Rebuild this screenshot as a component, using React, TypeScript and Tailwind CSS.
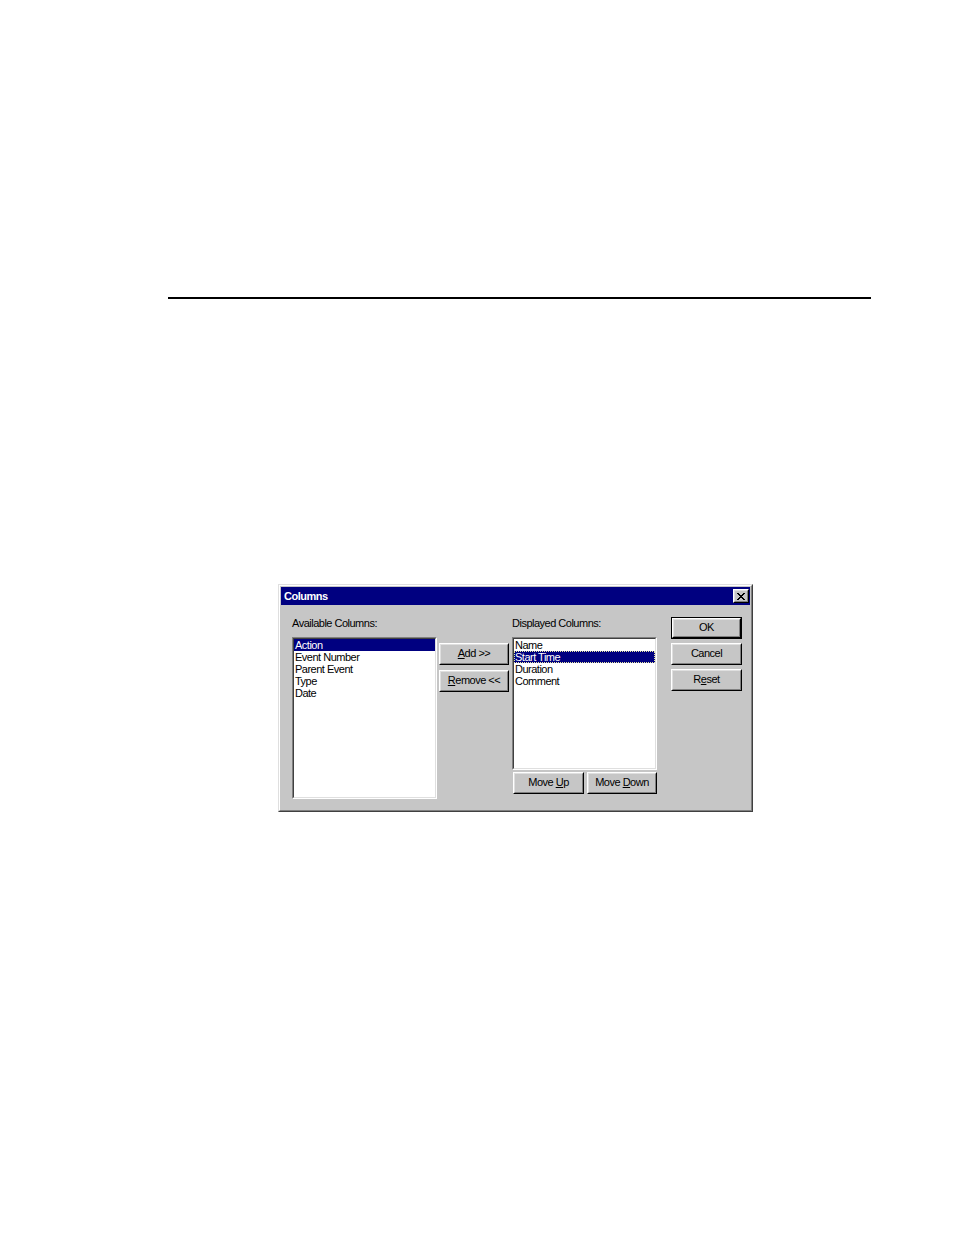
import React from "react";

function Raised({ className = "", children }: { className?: string; children?: React.ReactNode }) {
  return (
    <div className={`border border-t-white border-l-white border-b-black border-r-black ${className}`}>
      <div className="w-full h-full border border-t-[#dfdfdf] border-l-[#dfdfdf] border-b-[#808080] border-r-[#808080] bg-[#c6c6c6] flex items-center justify-center">
        {children}
      </div>
    </div>
  );
}

function Sunken({ className = "", children }: { className?: string; children?: React.ReactNode }) {
  return (
    <div className={`border border-t-[#808080] border-l-[#808080] border-b-white border-r-white ${className}`}>
      <div className="w-full h-full border border-t-[#404040] border-l-[#404040] border-b-[#dfdfdf] border-r-[#dfdfdf] bg-white flex flex-col">
        {children}
      </div>
    </div>
  );
}

function Btn({ w, children }: { w: string; children: React.ReactNode }) {
  return (
    <Raised className={`${w} h-[22px]`}>
      <span className="relative -top-[1px] text-[11px] leading-[13px] tracking-[-0.5px] text-black">{children}</span>
    </Raised>
  );
}

function Row({ text, selected, focus }: { text: string; selected?: boolean; focus?: boolean }) {
  const base = "h-[12px] leading-[12px] text-[11px] tracking-[-0.5px] whitespace-nowrap";
  if (selected) {
    return (
      <div className={`${base} bg-[#000080] text-white ${focus ? "border border-dotted border-[#e8e8a0] pl-0" : "pl-[1px]"}`}>
        <span className={focus ? "relative -top-[1px]" : ""}>{text}</span>
      </div>
    );
  }
  return <div className={`${base} text-black pl-[1px]`}>{text}</div>;
}

export default function App() {
  return (
    <div
      className="w-[954px] h-[1235px] bg-white overflow-hidden"
      style={{ fontFamily: '"Liberation Sans", Arial, sans-serif' }}
    >
      <div className="h-[297px]" />
      <div className="ml-[168px] w-[703px] h-[2px] bg-black" />
      <div className="h-[285px]" />
      {/* dialog */}
      <div className="ml-[278px] w-[475px] h-[228px] border border-t-[#dfdfdf] border-l-[#dfdfdf] border-b-[#404040] border-r-[#404040]">
        <div className="w-full h-full border border-t-white border-l-white border-b-[#808080] border-r-[#808080] bg-[#c6c6c6] p-[1px] flex flex-col">
          {/* title bar */}
          <div className="h-[18px] bg-[#000080] flex items-center justify-between pl-[3px] pr-[1px]">
            <span className="text-white font-bold text-[11px] tracking-[-0.5px] leading-[13px]">Columns</span>
            <Raised className="w-[16px] h-[14px]">
              <svg width="8" height="7" viewBox="0 0 8 7" shapeRendering="crispEdges">
                <path
                  d="M0 0h2v1h-2zM6 0h2v1h-2zM1 1h2v1h-2zM5 1h2v1h-2zM2 2h4v1h-4zM3 3h2v1h-2zM2 4h4v1h-4zM1 5h2v1h-2zM5 5h2v1h-2zM0 6h2v1h-2zM6 6h2v1h-2z"
                  fill="#000"
                />
              </svg>
            </Raised>
          </div>
          {/* content */}
          <div className="flex flex-row">
            {/* col 1 */}
            <div className="ml-[11px] w-[145px] flex flex-col">
              <div className="mt-[12px] h-[13px] leading-[13px] text-[11px] tracking-[-0.5px] text-black">Available Columns:</div>
              <Sunken className="mt-[7px] w-[145px] h-[162px]">
                <Row text="Action" selected />
                <Row text="Event Number" />
                <Row text="Parent Event" />
                <Row text="Type" />
                <Row text="Date" />
              </Sunken>
            </div>
            {/* col 2 */}
            <div className="ml-[2px] w-[70px] flex flex-col gap-[5px] mt-[38px]">
              <Btn w="w-[70px]">
                <u className="underline-offset-[1px]">A</u>dd &gt;&gt;
              </Btn>
              <Btn w="w-[70px]">
                <u className="underline-offset-[1px]">R</u>emove &lt;&lt;
              </Btn>
            </div>
            {/* col 3 */}
            <div className="ml-[3px] w-[145px] flex flex-col">
              <div className="mt-[12px] h-[13px] leading-[13px] text-[11px] tracking-[-0.5px] text-black">Displayed Columns:</div>
              <Sunken className="mt-[7px] w-[145px] h-[133px]">
                <Row text="Name" />
                <Row text="Start Time" selected focus />
                <Row text="Duration" />
                <Row text="Comment" />
              </Sunken>
              <div className="flex flex-row mt-[2px] ml-[1px] gap-[3px]">
                <Btn w="w-[71px]">
                  Move <u className="underline-offset-[1px]">U</u>p
                </Btn>
                <Btn w="w-[70px]">
                  Move <u className="underline-offset-[1px]">D</u>own
                </Btn>
              </div>
            </div>
            {/* col 4 */}
            <div className="ml-[14px] w-[71px] flex flex-col gap-[4px] mt-[12px]">
              <div className="border border-black w-[71px] h-[22px]">
                <Raised className="w-full h-full">
                  <span className="relative -top-[1px] text-[11px] leading-[13px] tracking-[-0.5px] text-black">OK</span>
                </Raised>
              </div>
              <Btn w="w-[71px]">Cancel</Btn>
              <Btn w="w-[71px]">
                R<u className="underline-offset-[1px]">e</u>set
              </Btn>
            </div>
          </div>
        </div>
      </div>
    </div>
  );
}
